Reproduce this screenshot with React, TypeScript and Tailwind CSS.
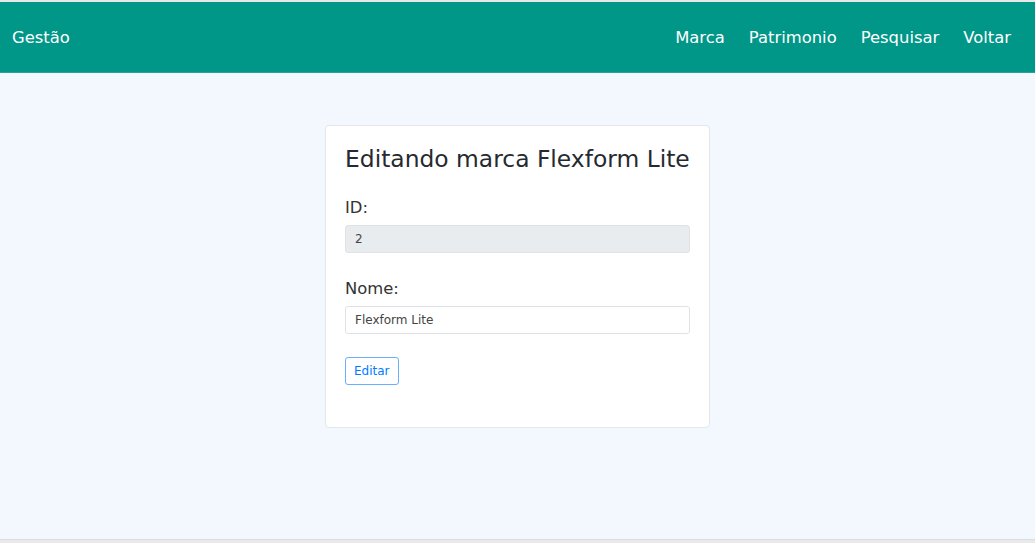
import React from "react";

export default function App() {
  const font = { fontFamily: '"DejaVu Sans", Verdana, sans-serif' };
  return (
    <div className="min-h-[543px] flex flex-col bg-[#f3f8fe]" style={font}>
      <div className="h-[2px] bg-[#e8e8e8]" />
      <nav className="h-[71px] bg-[#009688] border-b border-[#27a396] flex items-center justify-between pl-[12px] pr-[24px] pt-[3px] text-white">
        <span className="text-[16.4px]">Gestão</span>
        <div className="flex items-center gap-[24px] text-[16.4px]">
          <span>Marca</span>
          <span>Patrimonio</span>
          <span>Pesquisar</span>
          <span>Voltar</span>
        </div>
      </nav>
      <main className="flex-1 flex justify-center pt-[52px]">
        <div className="w-[385px] h-[303px] bg-white border border-[#e3e6ea] rounded-[4px] px-[19px] pt-[18px]">
          <h3 className="text-[23.4px] leading-[30px] text-[#262a2e] whitespace-nowrap">Editando marca Flexform Lite</h3>
          <div className="mt-[22px] text-[16.4px] leading-[24px] text-[#333]">ID:</div>
          <div className="mt-[5px] h-[28px] bg-[#e9ecef] border border-[#dfe2e6] rounded-[3px] flex items-center px-[9px] text-[12px] text-[#444]">2</div>
          <div className="mt-[24px] text-[16.4px] leading-[24px] text-[#333]">Nome:</div>
          <div className="mt-[5px] h-[28px] bg-white border border-[#dfe2e6] rounded-[3px] flex items-center px-[9px] text-[12px] text-[#444]">Flexform Lite</div>
          <button className="mt-[23px] h-[28px] px-[8px] border border-[#6aaefc] rounded-[3px] text-[12px] text-[#007bff] bg-white">Editar</button>
        </div>
      </main>
      <div className="h-[4px] bg-[#e9e9e9] border-t border-[#d9dbdd]" />
    </div>
  );
}
